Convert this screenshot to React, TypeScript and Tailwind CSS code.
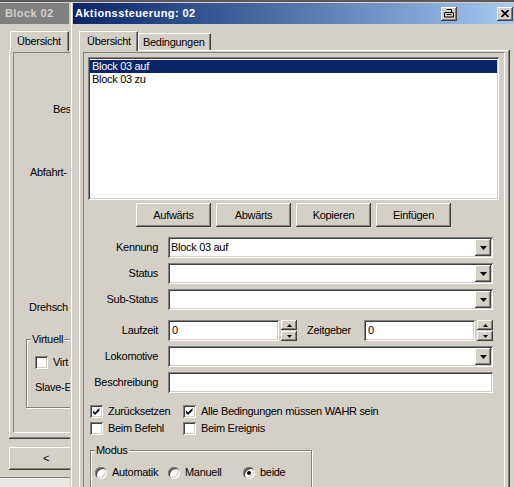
import React from "react";

// Win2000 bevels, reused by every control
const raised =
  "shadow-[inset_-1px_-1px_#404040,inset_1px_1px_#ffffff,inset_-2px_-2px_#808080,inset_2px_2px_#d4d0c8]";
const sunken =
  "shadow-[inset_1px_1px_#808080,inset_-1px_-1px_#ffffff,inset_2px_2px_#404040,inset_-2px_-2px_#d4d0c8]";

function DropButton() {
  return (
    <div className={`flex h-[17px] w-[16px] shrink-0 items-center justify-center bg-[#d4d0c8] ${raised}`}>
      <svg width="7" height="4" viewBox="0 0 7 4">
        <path d="M0 0h7L3.5 4z" fill="#000" />
      </svg>
    </div>
  );
}

function Combo({ value, className = "w-[325px]" }: { value?: string; className?: string }) {
  return (
    <div className={`flex h-[21px] items-center bg-white p-[2px] ${sunken} ${className}`}>
      <span className="flex-1 pl-[1px]">{value}</span>
      <DropButton />
    </div>
  );
}

function TextBox({ value, className = "w-[325px]" }: { value?: string; className?: string }) {
  return <div className={`flex h-[21px] items-center bg-white pl-[4px] ${sunken} ${className}`}>{value}</div>;
}

function Spin() {
  return (
    <div className="flex h-[21px] w-[16px] shrink-0 flex-col justify-between">
      <div className={`flex h-[10px] items-center justify-center bg-[#d4d0c8] ${raised}`}>
        <svg width="5" height="3" viewBox="0 0 5 3">
          <path d="M2.5 0L5 3H0z" fill="#000" />
        </svg>
      </div>
      <div className={`flex h-[10px] items-center justify-center bg-[#d4d0c8] ${raised}`}>
        <svg width="5" height="3" viewBox="0 0 5 3">
          <path d="M0 0h5L2.5 3z" fill="#000" />
        </svg>
      </div>
    </div>
  );
}

function Check({ checked, label }: { checked?: boolean; label: string }) {
  return (
    <div className="flex h-[13px] items-center whitespace-nowrap">
      <span className={`relative h-[13px] w-[13px] shrink-0 bg-white ${sunken}`}>
        {checked && (
          <svg className="absolute inset-0" width="13" height="13" viewBox="0 0 13 13">
            <path d="M3 5.5l2 2 4.5-4.5v2.5L5 10 3 8z" fill="#000" />
          </svg>
        )}
      </span>
      <span className="ml-[5px]">{label}</span>
    </div>
  );
}

function Radio({ checked, label, className = "" }: { checked?: boolean; label: string; className?: string }) {
  return (
    <div className={`flex h-[13px] items-center whitespace-nowrap ${className}`}>
      <span className={`relative h-[12px] w-[12px] shrink-0 rounded-full bg-white ${sunken}`}>
        {checked && <span className="absolute left-[4px] top-[4px] h-[4px] w-[4px] rounded-full bg-black" />}
      </span>
      <span className="ml-[5px]">{label}</span>
    </div>
  );
}

function Btn({ children }: { children: React.ReactNode }) {
  return (
    <div className={`flex h-[24px] w-[75px] items-center justify-center bg-[#d4d0c8] ${raised}`}>{children}</div>
  );
}

function Row({ label, children, className = "mt-[5px]" }: { label: string; children: React.ReactNode; className?: string }) {
  return (
    <div className={`flex items-center ${className}`}>
      <span className="w-[74px] text-right">{label}</span>
      <div className="ml-[10px] flex items-center">{children}</div>
    </div>
  );
}

function LeftWindow() {
  // only the part left of the dialog is visible, so the labels are what shows of them
  return (
    <div className="flex w-[70px] shrink-0 flex-col overflow-hidden">
      <div className="mr-[1px] flex h-[21px] items-center whitespace-nowrap bg-[#808080] pl-[5px] font-bold tracking-[0.4px] text-[#d4d0c8]">
        Block 02
      </div>
      <div className="flex h-[26px] items-end pl-[10px]">
        <div className="relative z-10 -mb-[1px] flex h-[20px] w-[59px] shrink-0 items-center border-l border-r border-t border-white border-r-[#404040] bg-[#d4d0c8] pl-[6px] shadow-[inset_-1px_0_#808080]">
          Übersicht
        </div>
      </div>
      <div className="ml-[9px] w-[140px] shrink-0 border-b border-l border-t border-white border-b-[#808080] pb-[4px] pl-[3px] pt-[1px] shadow-[0_1px_#404040]">
        <div className="flex h-[381px] flex-col whitespace-nowrap border-b border-l border-t border-[#808080] border-b-white">
          <span className="ml-[39px] mt-[50px]">Bes</span>
          <span className="ml-[16px] mt-[50px]">Abfahrt-</span>
          <span className="ml-[15px] mt-[122px]">Drehsch</span>
          <div className="relative ml-[12px] mt-[25px] flex h-[69px] w-[110px] flex-col border border-[#808080] shadow-[inset_1px_1px_#ffffff,1px_1px_#ffffff]">
            <span className="absolute -top-[7px] left-[4px] bg-[#d4d0c8] px-[1px]">Virtuell</span>
            <div className="ml-[8px] mt-[16px]">
              <Check label="Virt" />
            </div>
            <span className="ml-[8px] mt-[12px]">Slave-E</span>
          </div>
        </div>
      </div>
      <div className={`ml-[9px] mt-[9px] flex h-[23px] w-[74px] shrink-0 items-center justify-center bg-[#d4d0c8] ${raised}`}>
        &lt;
      </div>
      <div className="mt-[7px] h-[1px] shrink-0 bg-[#808080]" />
      <div className="flex-1 bg-[#eae8e3]" />
    </div>
  );
}

function RightWindow() {
  return (
    <div className="flex min-w-0 flex-1 flex-col pl-[3px] shadow-[inset_1px_0_#d4d0c8,inset_2px_0_#ffffff]">
      <div className="flex h-[21px] shrink-0 items-center bg-linear-to-r from-[#0a246a] to-[#a6caf0] pl-[2px] pr-[1px]">
        <span className="font-bold tracking-[0.4px] text-white">Aktionssteuerung: 02</span>
        <div className="flex-1" />
        <div className={`flex h-[14px] w-[16px] items-center justify-center bg-[#d4d0c8] ${raised}`}>
          <svg width="10" height="9" viewBox="0 0 10 9">
            <path d="M2.5 .5h5v2.5M1 3.5h8a.5.5 0 0 1 .5.5v4h-9V4a.5.5 0 0 1 .5-.5zM2.5 5.5h5" fill="none" stroke="#000" />
          </svg>
        </div>
        <div className={`ml-[40px] flex h-[14px] w-[16px] items-center justify-center bg-[#d4d0c8] ${raised}`}>
          <svg width="8" height="7" viewBox="0 0 8 7">
            <path d="M.5 0L7.5 7M7.5 0L.5 7" stroke="#000" strokeWidth="1.6" />
          </svg>
        </div>
      </div>

      <div className="flex h-[26px] shrink-0 items-end pl-[6px]">
        <div className="relative z-10 -mb-[1px] flex h-[20px] w-[59px] items-center border-l border-r border-t border-white border-r-[#404040] bg-[#d4d0c8] pl-[7px] shadow-[inset_-1px_0_#808080]">
          Übersicht
        </div>
        <div className="flex h-[17px] w-[73px] items-center border-l border-r border-t border-white border-r-[#404040] pl-[4px] shadow-[inset_-1px_0_#808080]">
          Bedingungen
        </div>
      </div>

      <div className="ml-[6px] w-[430px] flex-1 border-l border-r border-t border-white border-r-[#808080] pl-[3px] pr-[3px] pt-[1px] shadow-[1px_0_#404040]">
        <div className="flex h-[600px] flex-col border-l border-r border-t border-[#808080] border-r-white">
          <div className={`ml-[4px] mt-[4px] h-[143px] w-[411px] bg-white p-[2px] pt-[3px] ${sunken}`}>
            <div className="bg-[#0a246a] pl-[2px] text-white">Block 03 auf</div>
            <div className="pl-[2px]">Block 03 zu</div>
          </div>

          <div className="ml-[52px] mt-[3px] flex gap-[5px]">
            <Btn>Aufwärts</Btn>
            <Btn>Abwärts</Btn>
            <Btn>Kopieren</Btn>
            <Btn>Einfügen</Btn>
          </div>

          <Row label="Kennung" className="mt-[10px]">
            <Combo value="Block 03 auf" />
          </Row>
          <Row label="Status">
            <Combo />
          </Row>
          <Row label="Sub-Status">
            <Combo />
          </Row>
          <Row label="Laufzeit" className="mt-[10px]">
            <TextBox value="0" className="w-[111px]" />
            <div className="ml-[2px]">
              <Spin />
            </div>
            <span className="ml-[10px] w-[46px]">Zeitgeber</span>
            <TextBox value="0" className="ml-[11px] w-[111px]" />
            <div className="ml-[2px]">
              <Spin />
            </div>
          </Row>
          <Row label="Lokomotive">
            <Combo />
          </Row>
          <Row label="Beschreibung">
            <TextBox />
          </Row>

          <div className="ml-[6px] mt-[12px] flex">
            <div className="w-[93px]">
              <Check checked label="Zurücksetzen" />
            </div>
            <Check checked label="Alle Bedingungen müssen WAHR sein" />
          </div>
          <div className="ml-[6px] mt-[4px] flex">
            <div className="w-[93px]">
              <Check label="Beim Befehl" />
            </div>
            <Check label="Beim Ereignis" />
          </div>

          <div className="relative ml-[6px] mt-[15px] h-[60px] w-[222px] border border-[#808080] shadow-[inset_1px_1px_#ffffff,1px_1px_#ffffff]">
            <span className="absolute -top-[7px] left-[4px] bg-[#d4d0c8] px-[1px]">Modus</span>
            <div className="ml-[4px] mt-[15px] flex">
              <Radio label="Automatik" className="w-[73px]" />
              <Radio label="Manuell" className="w-[75px]" />
              <Radio checked label="beide" />
            </div>
          </div>
        </div>
      </div>
    </div>
  );
}

export default function App() {
  return (
    <div className="flex h-[487px] w-[514px] flex-col overflow-hidden bg-[#d4d0c8] font-['Liberation_Sans',Arial,sans-serif] text-[11px] leading-[13px] tracking-[-0.3px] text-black">
      <div className="h-[2px] shrink-0 bg-[#5a5a5a]" />
      <div className="h-[1px] shrink-0" />
      <div className="flex min-h-0 flex-1">
        <LeftWindow />
        <RightWindow />
      </div>
    </div>
  );
}
